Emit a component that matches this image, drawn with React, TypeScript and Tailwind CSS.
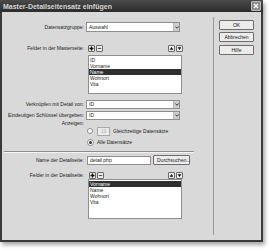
import React from 'react';

const font = { fontFamily: '"Liberation Sans", Arial, sans-serif' };

const SelectBox = ({ value, w = 'w-[94px]' }: { value: string; w?: string }) => (
  <div className={`${w} h-full flex items-center bg-white border border-[#8e8e8e] pl-[2px]`}>
    <span className="flex-1 text-[5px] leading-none text-[#222]">{value}</span>
    <div className="w-[6px] h-full bg-[#cfcfcf] border-l border-[#b5b5b5] flex items-center justify-center">
      <svg width="4" height="3" viewBox="0 0 4 3">
        <path d="M0.5 0.5 L2 2.3 L3.5 0.5" stroke="#333" strokeWidth="0.9" fill="none" />
      </svg>
    </div>
  </div>
);

const IconBtn = ({ kind }: { kind: 'plus' | 'minus' | 'up' | 'down' }) => (
  <div className="w-[7px] h-[7px] bg-[#ececec] border border-[#6a6a6a] rounded-[1px] flex items-center justify-center">
    <svg width="5" height="5" viewBox="0 0 5 5">
      {kind === 'plus' && <path d="M2.5 0.5 V4.5 M0.5 2.5 H4.5" stroke="#111" strokeWidth="1.4" />}
      {kind === 'minus' && <path d="M0.8 2.5 H4.2" stroke="#555" strokeWidth="1.1" />}
      {kind === 'up' && <path d="M0.6 3.8 L2.5 1 L4.4 3.8 Z" fill="#111" />}
      {kind === 'down' && <path d="M0.6 1.2 L2.5 4 L4.4 1.2 Z" fill="#111" />}
    </svg>
  </div>
);

const ListBox = ({ items, selected, h }: { items: string[]; selected: number; h: string }) => (
  <div className={`ml-[86px] w-[94px] ${h} bg-white border border-[#8e8e8e] pt-px`}>
    {items.map((it, i) => (
      <div
        key={it}
        className={`h-[6px] pl-[1px] text-[5px] leading-[6px] ${
          i === selected ? 'bg-[#2f2f2f] text-white' : 'text-[#222]'
        }`}
      >
        {it}
      </div>
    ))}
  </div>
);

const Label = ({ children }: { children: React.ReactNode }) => (
  <div className="w-[84px] pr-[2px] text-right text-[5px] leading-none text-[#222]">{children}</div>
);

const DlgButton = ({ children, className = '' }: { children: React.ReactNode; className?: string }) => (
  <div
    className={`w-[35px] h-[10px] bg-[#ececec] border border-[#6e6e6e] rounded-[1px] flex items-center justify-center text-[5px] leading-none text-[#222] ${className}`}
  >
    {children}
  </div>
);

export default function App() {
  return (
    <div className="w-[269px] h-[250px] bg-white" style={font}>
      <div className="w-[263px] h-[242px] flex flex-col bg-[#d9d9d9] border-x-2 border-b-2 border-[#3a3a3a] shadow-[2px_3px_4px_rgba(0,0,0,0.35)]">
        {/* title bar */}
        <div className="h-[12px] -mx-[2px] flex items-center justify-between bg-gradient-to-b from-[#4a4a4a] to-[#2c2c2c] pl-[3px] pr-[2px]">
          <span className="text-[7px] font-bold leading-none text-[#d6d6d6]">
            Master-Detailseitensatz einfügen
          </span>
          <div className="w-[10px] h-[10px] bg-[#8a8a8a] border border-[#b8b8b8] rounded-[1px] flex items-center justify-center">
            <svg width="6" height="6" viewBox="0 0 6 6">
              <path d="M1 1 L5 5 M5 1 L1 5" stroke="#fff" strokeWidth="1.3" />
            </svg>
          </div>
        </div>

        <div className="flex flex-1">
          {/* left column */}
          <div className="w-[209px] flex flex-col">
            <div className="mt-[10px] h-[10px] flex items-center">
              <Label>Datensatzgruppe:</Label>
              <SelectBox value="Auswahl" />
            </div>

            <div className="mt-[12px] h-[8px] flex items-center">
              <Label>Felder in der Masterseite:</Label>
              <div className="ml-[2px] flex gap-[1px]">
                <IconBtn kind="plus" />
                <IconBtn kind="minus" />
              </div>
              <div className="ml-[65px] flex gap-[1px]">
                <IconBtn kind="up" />
                <IconBtn kind="down" />
              </div>
            </div>

            <div className="mt-[3px] flex">
              <ListBox items={['ID', 'Vorname', 'Name', 'Wohnort', 'Vita']} selected={2} h="h-[39px]" />
            </div>

            <div className="mt-[6px] h-[9px] flex items-center">
              <Label>Verknüpfen mit Detail von:</Label>
              <SelectBox value="ID" />
            </div>
            <div className="mt-[2px] h-[9px] flex items-center">
              <Label>Eindeutigen Schlüssel übergeben:</Label>
              <SelectBox value="ID" />
            </div>

            <div className="flex">
              <div className="pt-[1px]">
                <Label>Anzeigen:</Label>
              </div>
              <div className="ml-[1px] flex flex-col pt-[6px]">
                <div className="h-[10px] flex items-center">
                  <div className="w-[6px] h-[6px] rounded-full bg-white border border-[#8a8a8a]" />
                  <div className="ml-[4px] w-[13px] h-[9px] bg-[#ececec] border border-[#a8a8a8] flex items-center pl-[3px] text-[5px] leading-none text-[#aaa]">
                    10
                  </div>
                  <span className="ml-[3px] text-[5px] leading-none text-[#222]">Gleichzeitige Datensätze</span>
                </div>
                <div className="mt-[1px] h-[10px] flex items-center">
                  <div className="w-[7px] h-[7px] rounded-full bg-white border border-[#8a8a8a] flex items-center justify-center">
                    <div className="w-[3px] h-[3px] rounded-full bg-[#333]" />
                  </div>
                  <span className="ml-[3px] text-[5px] leading-none text-[#222]">Alle Datensätze</span>
                </div>
              </div>
            </div>

            <div className="mt-[4px] ml-[2px] w-[190px] h-[2px] border-t border-[#8c8c8c] border-b border-b-[#f4f4f4]" />

            <div className="mt-[2px] h-[10px] flex items-center">
              <Label>Name der Detailseite:</Label>
              <div className="ml-[1px] w-[64px] h-[9px] bg-white border border-[#8e8e8e] flex items-center pl-[2px] text-[5px] leading-none text-[#222]">
                detail.php
              </div>
              <div className="ml-[2px] w-[37px] h-[10px] bg-[#ececec] border border-[#6e6e6e] rounded-[1px] flex items-center pl-[3px] text-[5px] leading-none text-[#222]">
                Durchsuchen...
              </div>
            </div>

            <div className="mt-[6px] h-[8px] flex items-center">
              <Label>Felder in der Detailseite:</Label>
              <div className="ml-[3px] flex gap-[1px]">
                <IconBtn kind="plus" />
                <IconBtn kind="minus" />
              </div>
              <div className="ml-[64px] flex gap-[1px]">
                <IconBtn kind="up" />
                <IconBtn kind="down" />
              </div>
            </div>

            <div className="flex">
              <ListBox items={['Vorname', 'Name', 'Wohnort', 'Vita']} selected={0} h="h-[40px]" />
            </div>
          </div>

          {/* vertical separator */}
          <div className="ml-[2px] mt-[5px] w-px h-[218px] bg-[#9a9a9a]" />

          {/* right column */}
          <div className="ml-[5px] flex flex-col">
            <DlgButton className="mt-[8px]">OK</DlgButton>
            <DlgButton className="mt-[2px]">Abbrechen</DlgButton>
            <DlgButton className="mt-[3px]">Hilfe</DlgButton>
          </div>
        </div>
      </div>
    </div>
  );
}
